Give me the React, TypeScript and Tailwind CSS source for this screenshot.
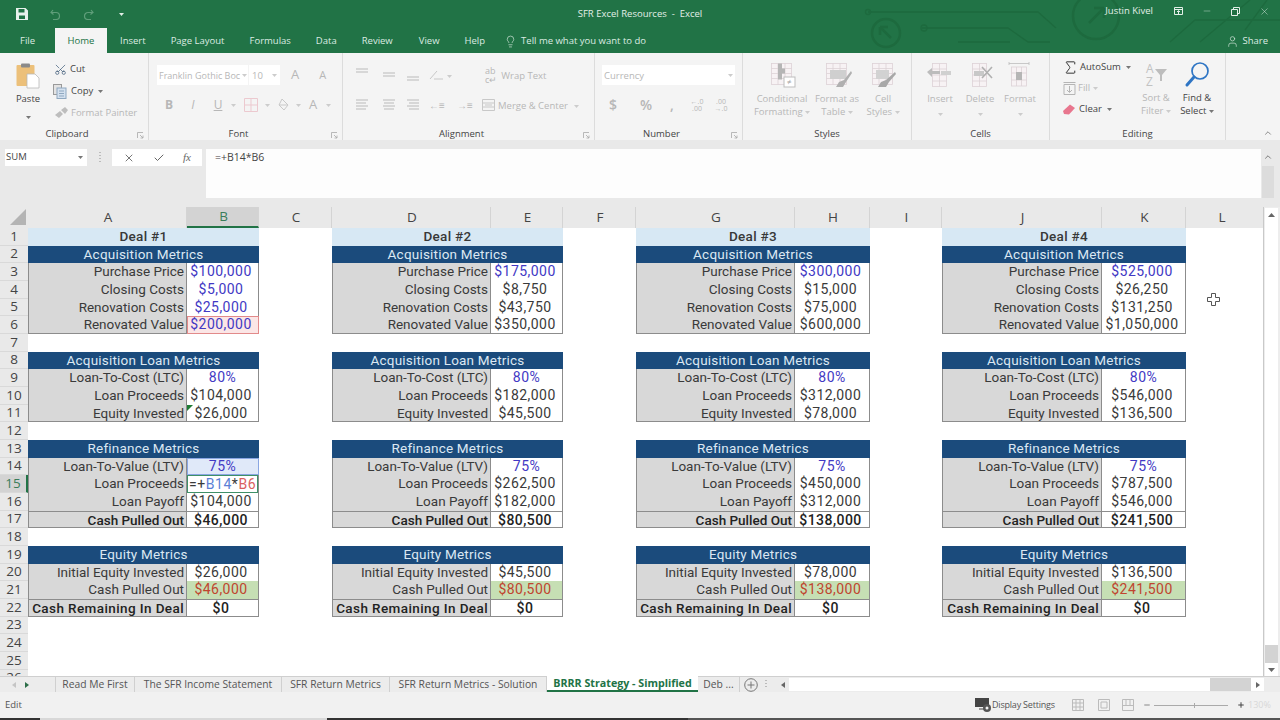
import React from "react";
import { Scissors, Check, X, Lightbulb, Minus, Plus, ChevronUp, Sigma, User } from "lucide-react";

const ui = "font-['Open_Sans',sans-serif]";
const cols =
  "grid-cols-[28px_159px_72px_73px_159px_72px_73px_159px_75px_72px_160px_84px_78px]";

type Row =
  | { t: "title"; s: string }
  | { t: "head"; s: string }
  | { t: "blank" }
  | { t: "m"; s: string; strong?: boolean; line?: boolean; end?: boolean };

const layout: Row[] = [
  { t: "title", s: "" },
  { t: "head", s: "Acquisition Metrics" },
  { t: "m", s: "Purchase Price" },
  { t: "m", s: "Closing Costs" },
  { t: "m", s: "Renovation Costs" },
  { t: "m", s: "Renovated Value", end: true },
  { t: "blank" },
  { t: "head", s: "Acquisition Loan Metrics" },
  { t: "m", s: "Loan-To-Cost (LTC)" },
  { t: "m", s: "Loan Proceeds" },
  { t: "m", s: "Equity Invested", end: true },
  { t: "blank" },
  { t: "head", s: "Refinance Metrics" },
  { t: "m", s: "Loan-To-Value (LTV)" },
  { t: "m", s: "Loan Proceeds" },
  { t: "m", s: "Loan Payoff" },
  { t: "m", s: "Cash Pulled Out", strong: true, line: true, end: true },
  { t: "blank" },
  { t: "head", s: "Equity Metrics" },
  { t: "m", s: "Initial Equity Invested" },
  { t: "m", s: "Cash Pulled Out" },
  { t: "m", s: "Cash Remaining In Deal", strong: true, line: true, end: true },
  { t: "blank" },
  { t: "blank" },
  { t: "blank" },
  { t: "blank" },
];

const deals: Record<number, string>[] = [
  { 3: "$100,000", 4: "$5,000", 5: "$25,000", 6: "$200,000", 9: "80%", 10: "$104,000", 11: "$26,000", 14: "75%", 15: "", 16: "$104,000", 17: "$46,000", 20: "$26,000", 21: "$46,000", 22: "$0" },
  { 3: "$175,000", 4: "$8,750", 5: "$43,750", 6: "$350,000", 9: "80%", 10: "$182,000", 11: "$45,500", 14: "75%", 15: "$262,500", 16: "$182,000", 17: "$80,500", 20: "$45,500", 21: "$80,500", 22: "$0" },
  { 3: "$300,000", 4: "$15,000", 5: "$75,000", 6: "$600,000", 9: "80%", 10: "$312,000", 11: "$78,000", 14: "75%", 15: "$450,000", 16: "$312,000", 17: "$138,000", 20: "$78,000", 21: "$138,000", 22: "$0" },
  { 3: "$525,000", 4: "$26,250", 5: "$131,250", 6: "$1,050,000", 9: "80%", 10: "$546,000", 11: "$136,500", 14: "75%", 15: "$787,500", 16: "$546,000", 17: "$241,500", 20: "$136,500", 21: "$241,500", 22: "$0" },
];

const cellFont = "font-['Roboto',sans-serif] text-[13.5px] leading-[17.5px]";
const valFont = "font-['Roboto',sans-serif] text-[14px] tracking-[0.45px] leading-[17.5px]";

function Block({ row, n, d }: { row: Row; n: number; d: number }) {
  if (row.t === "blank") return <div className="col-span-2" />;
  if (row.t === "title")
    return (
      <div className={`col-span-2 bg-[#d7e8f4] text-center font-medium tracking-[0.3px] text-[#383838] ${cellFont}`}>Deal #{d + 1}</div>
    );
  if (row.t === "head")
    return (
      <div className={`col-span-2 bg-[#1b4b7c] text-center tracking-[0.2px] text-[#dbe8f3] ${cellFont}`}>
        {row.s}
      </div>
    );
  const v = deals[d][n];
  const pct = v.endsWith("%");
  const blue = (d === 0 && n >= 3 && n <= 6) || pct || (n === 3 && d > 0);
  const pink = d === 0 && n === 6;
  const rangeCell = d === 0 && n === 14;
  const editing = d === 0 && n === 15;
  const green = n === 21;
  const line = row.line ? "border-t border-t-[#8c8c8c]" : "";
  const end = row.end ? "border-b border-b-[#8c8c8c]" : "";
  const bg = green ? "bg-[#c6dfb4]" : pink ? "bg-[#fbe6e6]" : rangeCell ? "bg-[#e0e9f9]" : "bg-white";
  const color = green ? "text-[#c0452f]" : row.strong ? "text-[#222]" : blue ? "text-[#4239c4]" : "text-[#3a3a3a]";
  const outline = pink
    ? "outline outline-1 -outline-offset-1 outline-[#e28a8a]"
    : rangeCell
    ? "outline outline-1 -outline-offset-1 outline-[#8aa6e2]"
    : "";
  return (
    <>
      <div
        className={`whitespace-nowrap border-x border-x-[#8c8c8c] bg-[#d8d8d8] pr-[2px] text-right ${line} ${end} ${cellFont} ${row.strong ? "font-medium text-[#222]" : "text-[#3a3a3a]"} ${n === 22 ? "tracking-[0.4px]" : ""}`}
      >
        {row.s}
      </div>
      <div
        className={`relative whitespace-nowrap border-r border-r-[#8c8c8c] text-center ${pct ? "" : "pr-[3px]"} ${bg} ${color} ${outline} ${line} ${end} ${valFont} ${row.strong ? "font-medium" : ""}`}
      >
        {editing ? (
          <span className="absolute inset-0 z-10 border border-[#3f9068] bg-white pl-[1px] text-left tracking-[0.55px] text-[#3a3a3a]">
            =+<span className="text-[#5b7fd6]">B14</span>*<span className="text-[#d9605f]">B6</span>
          </span>
        ) : (
          v
        )}
        {d === 0 && n === 11 && (
          <span className="absolute left-0 top-0 h-0 w-0 border-r-[6px] border-t-[6px] border-r-transparent border-t-[#1e7b34]" />
        )}
      </div>
    </>
  );
}

function Sheet() {
  return (
    <div className="relative">
      <div className={`grid ${cols} grid-rows-[21px] auto-rows-[17.68px] h-[469px] w-[1264px] overflow-hidden border-r border-[#c9c9c9] bg-white`}>
        <div className="flex items-end justify-end bg-[#e9e9e9] pb-[2px] pr-[1px]">
          <svg width="18" height="18" viewBox="0 0 18 18"><path d="M17 1v16H1z" fill="#b4b4b4" /></svg>
        </div>
        {["A", "B", "C", "D", "E", "F", "G", "H", "I", "J", "K", "L"].map((c) => (
          <div
            key={c}
            className={`flex items-center justify-center border-r border-[#d4d4d4] text-[13.5px] ${c === "L" ? "pr-[5px]" : "pl-[2px]"} ${ui} ${c === "B" ? "border-b-2 border-b-[#217346] bg-[#d3d3d3] text-[#3a7d5a]" : "bg-[#e9e9e9] text-[#444]"}`}
          >
            {c}
          </div>
        ))}
        {layout.map((row, i) => {
          const n = i + 1;
          return (
            <React.Fragment key={n}>
              <div
                className={`flex items-center justify-center border-b border-[#d9d9d9] text-[13.5px] leading-none ${ui} ${n === 15 ? "border-r-2 border-r-[#217346] bg-[#d3d3d3] text-[#3a7d5a]" : "bg-[#e9e9e9] text-[#444]"}`}
              >
                {n}
              </div>
              {[0, 1, 2, 3].map((d) => (
                <React.Fragment key={d}>
                  <Block row={row} n={n} d={d} />
                  <div />
                </React.Fragment>
              ))}
            </React.Fragment>
          );
        })}
      </div>
      <svg className="absolute left-[1207px] top-[86px]" width="13" height="13" viewBox="0 0 13 13">
        <path d="M4.5.5h4v4h4v4h-4v4h-4v-4h-4v-4h4z" fill="#fff" stroke="#555" />
      </svg>
    </div>
  );
}

function Launcher() {
  return (
    <svg className="absolute right-[4px] top-[5px]" width="7" height="7" viewBox="0 0 7 7" fill="none" stroke="#a8a8a8" strokeWidth="0.8">
      <path d="M0.5 6V0.5H6M3 3l3 3M6 3.5V6H3.5" />
    </svg>
  );
}

function Group({ w, label, children, launcher }: { w: string; label: string; children: React.ReactNode; launcher?: boolean }) {
  return (
    <div className={`relative flex h-[87px] flex-col border-r border-[#dcdcdc] ${w}`}>
      <div className="flex flex-1">{children}</div>
      <div className={`relative h-[13px] text-center text-[9.5px] leading-[13px] text-[#444] ${launcher ? "pr-[14px]" : ""}`}>
        {label}
        {launcher && <Launcher />}
      </div>
    </div>
  );
}

const Caret = ({ c = "#777" }: { c?: string }) => (
  <svg width="5" height="3" viewBox="0 0 5 3" className="inline-block"><path d="M0 0h5L2.5 3z" fill={c} /></svg>
);

const Lines = ({ a = "c", v }: { a?: "l" | "c" | "r"; v?: boolean }) => (
  <svg width="16" height="14" viewBox="0 0 16 14" stroke="#cdcdcd" strokeWidth="1.3" fill="none">
    {v ? (
      <path d={a === "l" ? "M2 1h12M2 4h12" : a === "c" ? "M2 5h12M2 8h12" : "M2 9h12M2 12h12"} />
    ) : (
      <path
        d={
          a === "l"
            ? "M2 2h12M2 5h10M2 8h12M2 11h10"
            : a === "c"
            ? "M2 2h12M3 5h10M2 8h12M3 11h10"
            : "M2 2h12M4 5h10M2 8h12M4 11h10"
        }
      />
    )}
  </svg>
);

const Paste = () => (
  <svg width="24" height="27" viewBox="0 0 24 27">
    <rect x="0.5" y="3" width="18" height="21" rx="1" fill="#ecc07a" />
    <rect x="5" y="1.5" width="9" height="4" rx="1" fill="#8a8a8a" />
    <path d="M11 12h8l4 4v10H11z" fill="#fff" stroke="#b9b9b9" strokeWidth="0.8" />
  </svg>
);

const CopyIcon = () => (
  <svg width="14" height="15" viewBox="0 0 14 15">
    <rect x="0.5" y="0.5" width="8" height="10" fill="#e3e3e3" stroke="#9a9a9a" />
    <rect x="4" y="4" width="9" height="10.5" fill="#d4e1ef" stroke="#8fa8c0" />
    <path d="M6 7h5M6 9.5h5M6 12h5" stroke="#8fa8c0" />
  </svg>
);

const Painter = () => (
  <svg width="14" height="12" viewBox="0 0 14 12"><path d="M1 8l5-4 3 3-4 4zM7 3l4-3 3 3-3 4z" fill="#bdbdbd" /></svg>
);

const TableIcon = ({ kind }: { kind: "cond" | "fmt" | "cell" }) => (
  <svg width="30" height="27" viewBox="0 0 30 27" fill="none">
    <g stroke="#dcd2d6" strokeWidth="0.8">
      <rect x="4.5" y="1.5" width="20" height="21" fill="#f7f2f4" />
      <path d="M4.5 6.5h20M4.5 11.5h20M4.5 16.5h20M11 1.5v21M18 1.5v21" />
    </g>
    {kind === "cond" && (
      <>
        <path d="M11 1.5h4v5h3v5h-3v6h-4z" fill="#b5b5b5" />
        <rect x="17" y="15" width="11" height="10" fill="#fff" stroke="#bdbdbd" />
        <text x="20" y="23" fontSize="8" fill="#a5a5a5">≠</text>
      </>
    )}
    {kind === "fmt" && (
      <>
        <path d="M8 8h16v9H8z" fill="#cfcfcf" />
        <path d="M14 25l3-5 5-2 7-9 1 2-6 9-3 5z" fill="#b0b0b0" />
      </>
    )}
    {kind === "cell" && (
      <>
        <rect x="8" y="8" width="13" height="9" fill="#d2d2d2" />
        <path d="M10 25l3-5 5-2 9-8 1 2-7 8-3 5z" fill="#a8a8a8" />
      </>
    )}
  </svg>
);

const CellsIcon = ({ kind }: { kind: "ins" | "del" | "fmt" }) => (
  <svg width="28" height="26" viewBox="0 0 28 26" fill="none">
    <g stroke="#dcd2d6" strokeWidth="0.8">
      {kind === "fmt" ? (
        <>
          <path d="M3 1.5h20M3 0v3M23 0v3" stroke="#bdbdbd" />
          <rect x="5.5" y="5" width="15" height="19" fill="#f7f2f4" />
          <path d="M5.5 11h15M5.5 18h15M10.5 5v19M15.5 5v19" />
        </>
      ) : (
        <>
          <rect x="6.5" y="1.5" width="14" height="23" fill="#f7f2f4" />
          <path d="M6.5 7h14M6.5 13h14M6.5 19h14M13.5 1.5v23" />
        </>
      )}
    </g>
    {kind === "ins" && <path d="M1 10l5-4v3h8v3h-8v3z" fill="#bcbcbc" />}
    {kind === "ins" && <rect x="15" y="9" width="10" height="4" fill="#d0d0d0" />}
    {kind === "del" && <rect x="8" y="9" width="10" height="5" fill="#c8c8c8" />}
    {kind === "del" && <path d="M16 5l10 11M26 5L16 16" stroke="#b0b0b0" strokeWidth="1.6" />}
    {kind === "fmt" && <rect x="10" y="10" width="6" height="8" fill="#b5b5b5" />}
  </svg>
);

function Ribbon() {
  const off = "text-[#b7b7b7]";
  const dim = `text-[9.5px] leading-[13px] ${off}`;
  const num = `flex w-[26px] justify-center text-[14px] font-semibold leading-[20px] ${off}`;
  return (
    <div className={`flex h-[87px] bg-[#f4f4f4] text-[#444] ${ui}`}>
      <Group w="w-[149px]" label="Clipboard" launcher>
        <div className="ml-[3px] flex w-[50px] flex-col items-center pt-[9px] text-[9.5px]">
          <Paste />
          <span className="mt-[3px] leading-[14px]">Paste</span>
          <span className="mt-[4px]"><Caret /></span>
        </div>
        <div className="flex flex-col pt-[5px] text-[9.5px]">
          <div className="flex h-[22px] items-center gap-[3px] pl-[1px]"><Scissors size={13} strokeWidth={1.3} className="rotate-90 -scale-x-100 text-[#3d5a78]" />Cut</div>
          <div className="flex h-[22px] items-center gap-[4px]"><CopyIcon />Copy <span className="ml-[1px]"><Caret /></span></div>
          <div className={`flex h-[22px] items-center gap-[3px] pl-[1px] ${off}`}><Painter />Format Painter</div>
        </div>
      </Group>

      <Group w="w-[194px]" label="Font" launcher>
        <div className="flex flex-1 flex-col pt-[12px]">
          <div className="flex h-[20px] items-center pl-[8px]">
            <div className={`flex h-[20px] w-[91px] items-center justify-between whitespace-nowrap bg-white pl-[2px] pr-[1px] !text-[9px] ${dim}`}><span>Franklin Gothic Boc</span><Caret c="#ccc" /></div>
            <div className={`ml-[1px] flex h-[20px] w-[31px] items-center justify-between bg-white pl-[3px] pr-[3px] ${dim}`}><span>10</span><Caret c="#ccc" /></div>
            <span className={`ml-[11px] text-[13px] ${off}`}>A</span>
            <span className={`ml-[20px] text-[11px] ${off}`}>A</span>
          </div>
          <div className="mt-[10px] flex h-[20px] items-center pl-[8px]">
            <span className={`w-[24px] text-center text-[12px] font-bold ${off}`}>B</span>
            <span className={`w-[24px] text-center text-[12px] italic ${off}`}>I</span>
            <span className={`ml-[2px] w-[22px] text-center text-[12px] underline ${off}`}>U</span>
            <span className="flex w-[9px] justify-center"><Caret c="#ccc" /></span>
            <span className="flex w-[26px] justify-center"><svg width="14" height="14" viewBox="0 0 14 14" fill="none" stroke="#ecc9cf"><path d="M.5.5h13v13H.5zM7 .5v13M.5 7h13" /></svg></span>
            <span className="flex w-[7px] justify-center"><Caret c="#ccc" /></span>
            <span className="flex w-[24px] justify-center"><svg width="13" height="14" viewBox="0 0 13 14" fill="none" stroke="#c8c8c8"><path d="M5 1l6 6-4 5-5-5zM2 7h8" /></svg></span>
            <span className="flex w-[6px] justify-center"><Caret c="#ccc" /></span>
            <span className={`w-[24px] text-center text-[13px] ${off}`}>A</span>
            <span className="flex w-[6px] justify-center"><Caret c="#ccc" /></span>
          </div>
        </div>
      </Group>

      <Group w="w-[252px]" label="Alignment" launcher>
        <div className="flex flex-1 flex-col pt-[12px]">
          <div className="flex h-[20px] items-center pl-[11px]">
            <span className="w-[27px]"><Lines a="l" v /></span>
            <span className="w-[24px]"><Lines a="c" v /></span>
            <span className="w-[24px]"><Lines a="r" v /></span>
            <svg width="15" height="12" viewBox="0 0 15 12" fill="none" stroke="#c8c8c8"><path d="M1 10L8 2M5 10h9" /></svg>
            <span className="ml-[3px]"><Caret c="#ccc" /></span>
            <span className={`ml-[33px] text-[9px] leading-[9px] ${off}`}>ab<br />c↵</span>
            <span className={`ml-[4px] whitespace-nowrap ${dim}`}>Wrap Text</span>
          </div>
          <div className="mt-[10px] flex h-[20px] items-center pl-[11px]">
            <span className="w-[27px]"><Lines a="l" /></span>
            <span className="w-[24px]"><Lines a="c" /></span>
            <span className="w-[24px]"><Lines a="r" /></span>
            <span className={`w-[28px] text-[10px] ${off}`}>←≡</span>
            <span className={`w-[20px] text-[10px] ${off}`}>→≡</span>
            <svg className="ml-[5px]" width="13" height="12" viewBox="0 0 13 12" fill="none" stroke="#c8c8c8"><path d="M.5.5h12v11H.5zM.5 4h12M.5 8h12M3 6h7" /></svg>
            <span className={`ml-[3px] whitespace-nowrap ${dim}`}>Merge &amp; Center</span>
            <span className="ml-[6px]"><Caret c="#ccc" /></span>
          </div>
        </div>
      </Group>

      <Group w="w-[148px]" label="Number" launcher>
        <div className="flex flex-1 flex-col pl-[7px] pt-[12px]">
          <div className={`flex h-[20px] w-[133px] items-center justify-between bg-white px-[2px] ${dim}`}><span>Currency</span><Caret c="#ccc" /></div>
          <div className="-ml-[2px] mt-[10px] flex h-[20px] items-center">
            <span className={num}>$</span>
            <span className={`${num} ml-[7px]`}>%</span>
            <span className={num}>,</span>
            <span className={`w-[24px] text-center text-[7px] leading-[7px] ${off}`}>←.0<br />.00</span>
            <span className={`w-[24px] text-center text-[7px] leading-[7px] ${off}`}>.00<br />→.0</span>
          </div>
        </div>
      </Group>

      <Group w="w-[169px]" label="Styles">
        <div className={`ml-[9px] flex pt-[9px] text-center ${dim}`}>
          <div className="flex w-[60px] flex-col items-center"><TableIcon kind="cond" /><span className="mt-[3px]">Conditional</span><span>Formatting <Caret c="#ccc" /></span></div>
          <div className="flex w-[50px] flex-col items-center"><TableIcon kind="fmt" /><span className="mt-[3px]">Format as</span><span>Table <Caret c="#ccc" /></span></div>
          <div className="flex w-[42px] flex-col items-center"><TableIcon kind="cell" /><span className="mt-[3px]">Cell</span><span>Styles <Caret c="#ccc" /></span></div>
        </div>
      </Group>

      <Group w="w-[138px]" label="Cells">
        <div className={`ml-[8px] flex pt-[9px] text-center ${dim}`}>
          {([["Insert", "ins"], ["Delete", "del"], ["Format", "fmt"]] as const).map(([l, k]) => (
            <div key={l} className="flex w-[40px] flex-col items-center">
              <CellsIcon kind={k} />
              <span className="mt-[4px]">{l}</span>
              <span className="mt-[2px]"><Caret c="#ccc" /></span>
            </div>
          ))}
        </div>
      </Group>

      <Group w="w-[176px]" label="Editing">
        <div className="flex">
          <div className="w-[86px] pl-[12px] pt-[4px] text-[9.5px]">
            <div className="flex h-[21px] items-center gap-[1px]"><Sigma size={17} strokeWidth={1.4} className="text-[#333]" />AutoSum<span className="ml-[4px]"><Caret /></span></div>
            <div className={`flex h-[21px] items-center gap-[2px] pl-[1px] ${off}`}>
              <svg width="13" height="13" viewBox="0 0 13 13" fill="none" stroke="#b5b5b5"><path d="M.5.5h12M1 2.5h11v10H1zM6.5 4v6M4 8l2.5 2.5L9 8" /></svg>
              Fill <span className="ml-[1px]"><Caret c="#ccc" /></span>
            </div>
            <div className="flex h-[21px] items-center gap-[4px] pl-[1px]">
              <svg width="12" height="11" viewBox="0 0 12 11"><path d="M7 .5L12 4 6 10.5 1 10 0 7z" fill="#e8768e" /></svg>
              Clear<span className="ml-[1px]"><Caret /></span>
            </div>
          </div>
          <div className={`flex w-[40px] flex-col items-center pt-[9px] text-center ${dim}`}>
            <svg width="24" height="26" viewBox="0 0 24 26" fill="#bdbdbd"><text x="2" y="11" fontSize="12" fill="#c2c2c2">A</text><text x="2" y="24" fontSize="12" fill="#c2c2c2">Z</text><path d="M11 7h12l-5 6v6h-2v-6z" /></svg>
            <span className="mt-[3px]">Sort &amp;</span>
            <span>Filter <Caret c="#ccc" /></span>
          </div>
          <div className="flex w-[42px] flex-col items-center pt-[8px] text-center text-[9.5px] leading-[13px]">
            <svg width="26" height="27" viewBox="0 0 26 27" fill="none" stroke="#2e75c4"><circle cx="16" cy="10" r="8" strokeWidth="1.7" /><path d="M10 16l-7 8" strokeWidth="3" strokeLinecap="round" /></svg>
            <span className="mt-[3px]">Find &amp;</span>
            <span>Select <Caret /></span>
          </div>
        </div>
      </Group>

      <div className="flex flex-1 items-end justify-end pb-[2px] pr-[7px]"><ChevronUp size={10} className="text-[#777]" /></div>
    </div>
  );
}

const Circuit = () => (
  <svg className="pointer-events-none absolute right-0 top-0" width="430" height="53" viewBox="850 0 430 53" fill="none" stroke="#1d6a3e" strokeWidth="1.3">
    <path d="M868 12h170l18 16M922 28h86l20 14h22M958 42h52" />
    <circle cx="868" cy="12" r="2.5" />
    <circle cx="924" cy="28" r="3" />
    <circle cx="886" cy="33" r="14" strokeWidth="2.5" />
    <path d="M880 27l11 11M880 27h8M880 27v8" strokeWidth="2.5" />
    <circle cx="1096" cy="16" r="23" strokeWidth="2.5" />
    <path d="M1089 23l15-15M1104 8h-10M1104 8v10" strokeWidth="2.5" />
    <path d="M1170 42l25-22h85M1200 42l50-42M1245 30l22-30" />
  </svg>
);

function TitleBar() {
  return (
    <div className={`relative bg-[#217346] ${ui}`}>
      <Circuit />
      <div className="relative flex h-[28px] items-center text-[9.5px] text-[#e3efe8]">
        <div className="flex items-center pl-[16px]">
          <svg width="12" height="12" viewBox="0 0 12 12" fill="#e8f1ec"><path d="M0 0h9.5L12 2.5V12H0zM2.5 1v3.5h6V1zM3 7.5V11h6V7.5z" fillRule="evenodd" /></svg>
          <svg className="ml-[22px]" width="11" height="11" viewBox="0 0 11 11" fill="none" stroke="#5f9e7a" strokeWidth="1.2"><path d="M3 1L1 3.5 3.5 5.5M1.5 3.5H6a3.5 3.5 0 010 7H3" /></svg>
          <svg className="ml-[22px]" width="11" height="11" viewBox="0 0 11 11" fill="none" stroke="#5f9e7a" strokeWidth="1.2"><path d="M8 1l2 2.5L7.5 5.5M9.5 3.5H5a3.5 3.5 0 000 7h3" /></svg>
          <span className="ml-[25px] flex flex-col items-center gap-[1px]"><Caret c="#e3efe8" /></span>
        </div>
        <div className="absolute inset-x-0 top-0 flex h-[28px] items-center justify-center">SFR Excel Resources &nbsp;-&nbsp; Excel</div>
        <div className="ml-auto flex items-center pb-[6px]">
          <span className="mr-[21px]">Justin Kivel</span>
          <svg width="9" height="8" viewBox="0 0 9 8" fill="none" stroke="#e3efe8"><path d="M.5.5h8v7h-8zM.5 2.5h8M4.5 7V4M3 5l1.5-1.5L6 5" /></svg>
          <Minus size={10} className="ml-[19px] text-[#e3efe8]" strokeWidth={1} />
          <svg className="ml-[19px]" width="9" height="9" viewBox="0 0 9 9" fill="none" stroke="#e3efe8"><path d="M2.5 2.5V.5h6v6h-2M.5 2.5h6v6h-6z" /></svg>
          <X size={11} className="ml-[19px] mr-[10px] text-[#e3efe8]" strokeWidth={1} />
        </div>
      </div>
      <div className="relative flex h-[25px] items-center pt-[1px] text-[9.5px] text-[#dcebe2]">
        <span className="w-[55px] pl-[20px]">File</span>
        <span className="-mt-[1px] flex h-[25px] w-[52px] items-center justify-center bg-[#f4f4f4] pt-[1px] text-[#217346]">Home</span>
        <span className="ml-[13px]">Insert</span>
        <span className="ml-[25px]">Page Layout</span>
        <span className="ml-[25px]">Formulas</span>
        <span className="ml-[25px]">Data</span>
        <span className="ml-[25px]">Review</span>
        <span className="ml-[26px]">View</span>
        <span className="ml-[25px]">Help</span>
        <Lightbulb size={13} strokeWidth={1.2} className="ml-[19px] text-[#dcebe2]" />
        <span className="ml-[4px]">Tell me what you want to do</span>
        <div className="ml-auto flex items-center gap-[3px] pr-[12px]"><User size={13} strokeWidth={1.2} />Share</div>
      </div>
    </div>
  );
}

function FormulaBar() {
  return (
    <div className={`flex h-[67px] items-start bg-[#e9e9e9] pt-[9px] ${ui}`}>
      <div className="ml-[5px] flex h-[17px] w-[82px] items-center justify-between bg-white pl-[1px] pr-[4px] text-[9.5px] text-[#444]">SUM<Caret /></div>
      <span className="ml-[12px] mt-[3px] flex flex-col gap-[2px]"><i className="block h-px w-[2px] bg-[#bbb]" /><i className="block h-px w-[2px] bg-[#bbb]" /><i className="block h-px w-[2px] bg-[#bbb]" /><i className="block h-px w-[2px] bg-[#bbb]" /></span>
      <div className="ml-[11px] flex h-[17px] w-[90px] items-center justify-around bg-white px-[2px] text-[#666]">
        <X size={12} strokeWidth={1.8} />
        <Check size={12} strokeWidth={2} />
        <span className="font-['Liberation_Serif',serif] text-[11px] italic">fx</span>
      </div>
      <div className="ml-[4px] h-[49px] w-[1055px] bg-[#fdfdfd] pl-[9px] pt-[2px] text-[10.5px] leading-[13px] text-[#444]">=+B14*B6</div>
      <div className="ml-[1px] flex w-[12px] flex-col items-center">
        <ChevronUp size={10} className="my-[3px] text-[#666]" />
        <div className="mt-[1px] h-[32px] w-[12px] bg-[#dcdcdc]" />
      </div>
    </div>
  );
}

function VScroll() {
  return (
    <div className="flex h-[469px] w-[16px] flex-col bg-[#ededed] pl-[1px] pr-[2px] pt-[1px]">
      <div className="flex h-[14px] items-center justify-center bg-white"><svg width="7" height="4" viewBox="0 0 7 4"><path d="M0 4h7L3.5 0z" fill="#666" /></svg></div>
      <div className="flex-1 bg-white" />
      <div className="h-[18px] bg-[#d3d3d3]" />
      <div className="flex h-[13px] items-center justify-center bg-white"><svg width="7" height="4" viewBox="0 0 7 4"><path d="M0 0h7L3.5 4z" fill="#666" /></svg></div>
    </div>
  );
}

function Tabs() {
  const tabs: [string, string][] = [
    ["Read Me First", "w-[79px]"],
    ["The SFR Income Statement", "w-[147px]"],
    ["SFR Return Metrics", "w-[108px]"],
    ["SFR Return Metrics - Solution", "w-[157px]"],
  ];
  return (
    <div className={`flex h-[16px] items-stretch border-t border-[#cfcfcf] bg-[#ececec] text-[10.3px] text-[#555] ${ui}`}>
      <div className="flex w-[56px] items-center gap-[9px] border-r border-[#d0d0d0] pl-[12px]">
        <svg width="4" height="6" viewBox="0 0 4 6"><path d="M4 0v6L0 3z" fill="#c5c5c5" /></svg>
        <svg width="4" height="6" viewBox="0 0 4 6"><path d="M0 0v6l4-3z" fill="#2c6e48" /></svg>
      </div>
      {tabs.map(([t, w]) => (
        <div key={t} className={`flex items-center justify-center whitespace-nowrap border-r border-[#d0d0d0] ${w}`}>{t}</div>
      ))}
      <div className="-mt-px flex w-[151px] items-center justify-center whitespace-nowrap border-b-2 border-[#217346] bg-white text-[10.7px] font-bold text-[#217346]">BRRR Strategy - Simplified</div>
      <div className="flex w-[42px] items-center justify-center whitespace-nowrap border-r border-[#d0d0d0]">Deb ...</div>
      <div className="ml-[1px] flex w-[17px] items-center justify-center pl-[2px]"><svg width="14" height="14" viewBox="0 0 14 14" fill="none" stroke="#777"><circle cx="7" cy="7" r="6.3" /><path d="M7 3.5v7M3.5 7h7" /></svg></div>
      <span className="ml-[7px] mt-[3px] flex flex-col gap-[2px]"><i className="block h-px w-[2px] bg-[#bbb]" /><i className="block h-px w-[2px] bg-[#bbb]" /><i className="block h-px w-[2px] bg-[#bbb]" /></span>
      <div className="ml-[14px] flex w-[8px] items-center"><svg width="4" height="6" viewBox="0 0 4 6"><path d="M4 0v6L0 3z" fill="#666" /></svg></div>
      <div className="my-[1px] w-[421px] bg-white" />
      <div className="my-[1px] w-[41px] bg-[#d3d3d3]" />
      <div className="my-[1px] flex w-[13px] items-center justify-center bg-white"><svg width="4" height="6" viewBox="0 0 4 6"><path d="M0 0v6l4-3z" fill="#666" /></svg></div>
    </div>
  );
}

function Status() {
  return (
    <div className={`flex h-[26px] items-center whitespace-nowrap bg-[#f1f1f1] pl-[5px] text-[9.5px] text-[#555] ${ui}`}>
      <span className="w-[970px]">Edit</span>
      <svg className="shrink-0" width="17" height="16" viewBox="0 0 17 16"><rect x="0" y="1" width="14" height="9" fill="#444" /><path d="M4 12h6" stroke="#444" /><circle cx="12" cy="11" r="4" fill="#555" /><circle cx="12" cy="11" r="1.5" fill="#f1f1f1" /></svg>
      <span className="w-[80px] shrink-0 text-[9px] tracking-[-0.2px]">Display Settings</span>
      <svg className="shrink-0" width="12" height="12" viewBox="0 0 12 12" fill="none" stroke="#bbb"><path d="M.5.5h11v11H.5zM4 .5v11M8 .5v11M.5 4h11M.5 8h11" /></svg>
      <svg className="ml-[14px] shrink-0" width="12" height="12" viewBox="0 0 12 12" fill="none" stroke="#bbb"><path d="M.5.5h11v11H.5zM3 3h6v6H3z" /></svg>
      <svg className="ml-[12px] shrink-0" width="12" height="12" viewBox="0 0 12 12" fill="none" stroke="#bbb"><path d="M.5.5h11v11H.5zM4 .5v6M8 .5v6M.5 6.5h11" /></svg>
      <Minus size={8} strokeWidth={3} className="ml-[9px] shrink-0 text-[#888]" />
      <div className="relative ml-[3px] h-px w-[74px] shrink-0 bg-[#aaa]"><span className="absolute left-[40px] top-[-2px] h-[5px] w-px bg-[#aaa]" /></div>
      <Plus size={8} strokeWidth={3} className="ml-[9px] shrink-0 text-[#444]" />
      <span className="ml-[3px] text-[9px] text-[#d8d8d8]">130%</span>
    </div>
  );
}

export default function App() {
  return (
    <div className="flex h-[720px] w-[1280px] flex-col overflow-hidden bg-[#f1f1f1]">
      <TitleBar />
      <Ribbon />
      <FormulaBar />
      <div className="flex">
        <Sheet />
        <VScroll />
      </div>
      <Tabs />
      <Status />
      <div className="flex h-[2px]">
        <div className="w-[40px] bg-[#333]" />
        <div className="w-[287px] bg-[#d8d8d8]" />
        <div className="w-[361px] bg-[#333]" />
        <div className="flex-1 bg-[#555]" />
      </div>
    </div>
  );
}
